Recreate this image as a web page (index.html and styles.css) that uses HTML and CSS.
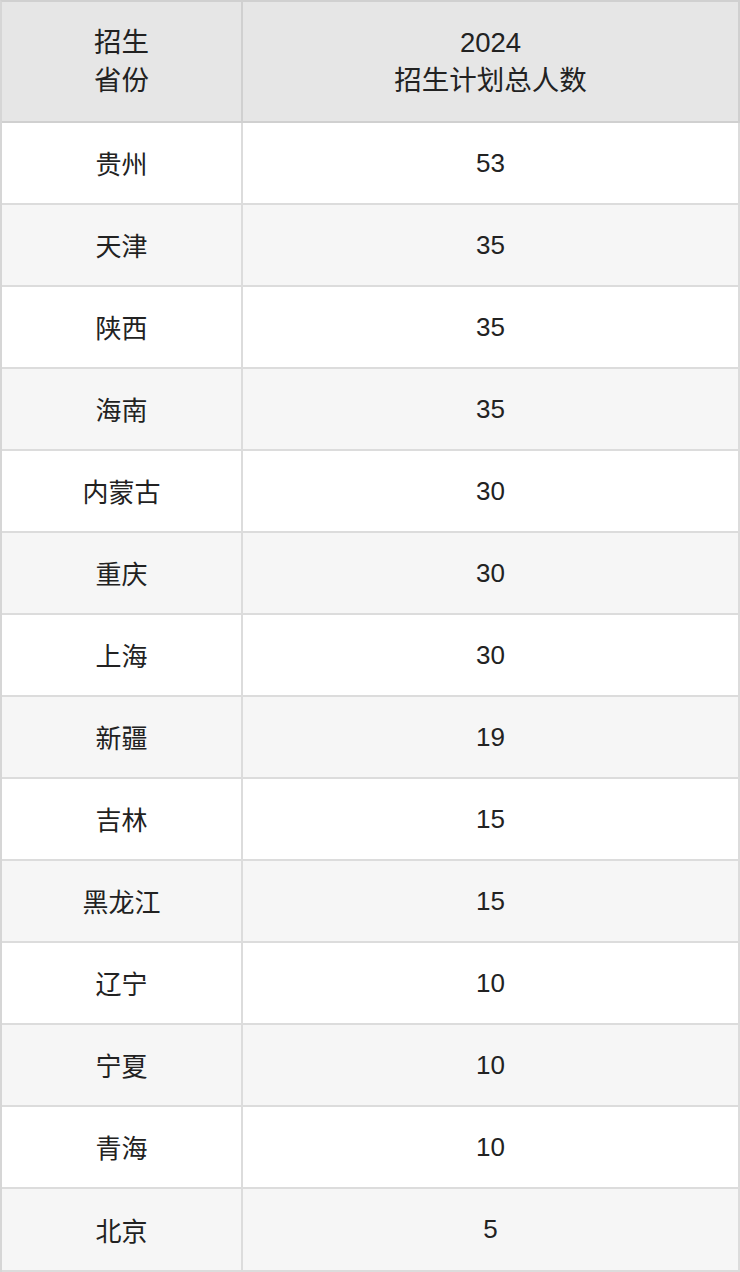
FILE: index.html
```html
<!DOCTYPE html>
<html lang="zh">
<head>
<meta charset="utf-8">
<link rel="stylesheet" href="styles.css">
</head>
<body>
<table class="plan">
  <colgroup><col class="c1"><col class="c2"></colgroup>
  <thead>
    <tr class="head"><th>招生<br>省份</th><th>2024<br>招生计划总人数</th></tr>
  </thead>
  <tbody>
    <tr><td>贵州</td><td>53</td></tr>
    <tr><td>天津</td><td>35</td></tr>
    <tr><td>陕西</td><td>35</td></tr>
    <tr><td>海南</td><td>35</td></tr>
    <tr><td>内蒙古</td><td>30</td></tr>
    <tr><td>重庆</td><td>30</td></tr>
    <tr><td>上海</td><td>30</td></tr>
    <tr><td>新疆</td><td>19</td></tr>
    <tr><td>吉林</td><td>15</td></tr>
    <tr><td>黑龙江</td><td>15</td></tr>
    <tr><td>辽宁</td><td>10</td></tr>
    <tr><td>宁夏</td><td>10</td></tr>
    <tr><td>青海</td><td>10</td></tr>
    <tr class="last"><td>北京</td><td>5</td></tr>
  </tbody>
</table>
</body>
</html>
```
FILE: styles.css
```css
html, body {
  margin: 0;
  padding: 0;
  background: #ffffff;
}
.plan {
  width: 740px;
  border-collapse: separate;
  border-spacing: 0;
  table-layout: fixed;
  border-left: 2px solid #d6d6d6;
  border-top: 2px solid #d0d0d0;
  font-family: "Liberation Sans", "Noto Sans CJK SC", sans-serif;
  font-size: 26px;
  color: #222222;
}
.c1 { width: 241px; }
.c2 { width: 497px; }
.plan th, .plan td {
  padding: 0;
  text-align: center;
  vertical-align: middle;
  border-right: 2px solid #dcdcdc;
  border-bottom: 2px solid #dcdcdc;
  font-weight: normal;
}
.plan tbody td:first-child {
  font-family: "Noto Sans CJK SC", sans-serif;
  line-height: 32px;
}
.plan .head th {
  background: #e6e6e6;
  border-right-color: #d0d0d0;
  border-bottom-color: #d0d0d0;
  font-size: 27.5px;
  line-height: 38px;
}
.plan .head { height: 121px; }
.plan tbody tr { height: 82px; }
.plan tbody tr.last { height: 83px; }
.plan tbody tr:nth-child(even) td { background: #f6f6f6; }
```
